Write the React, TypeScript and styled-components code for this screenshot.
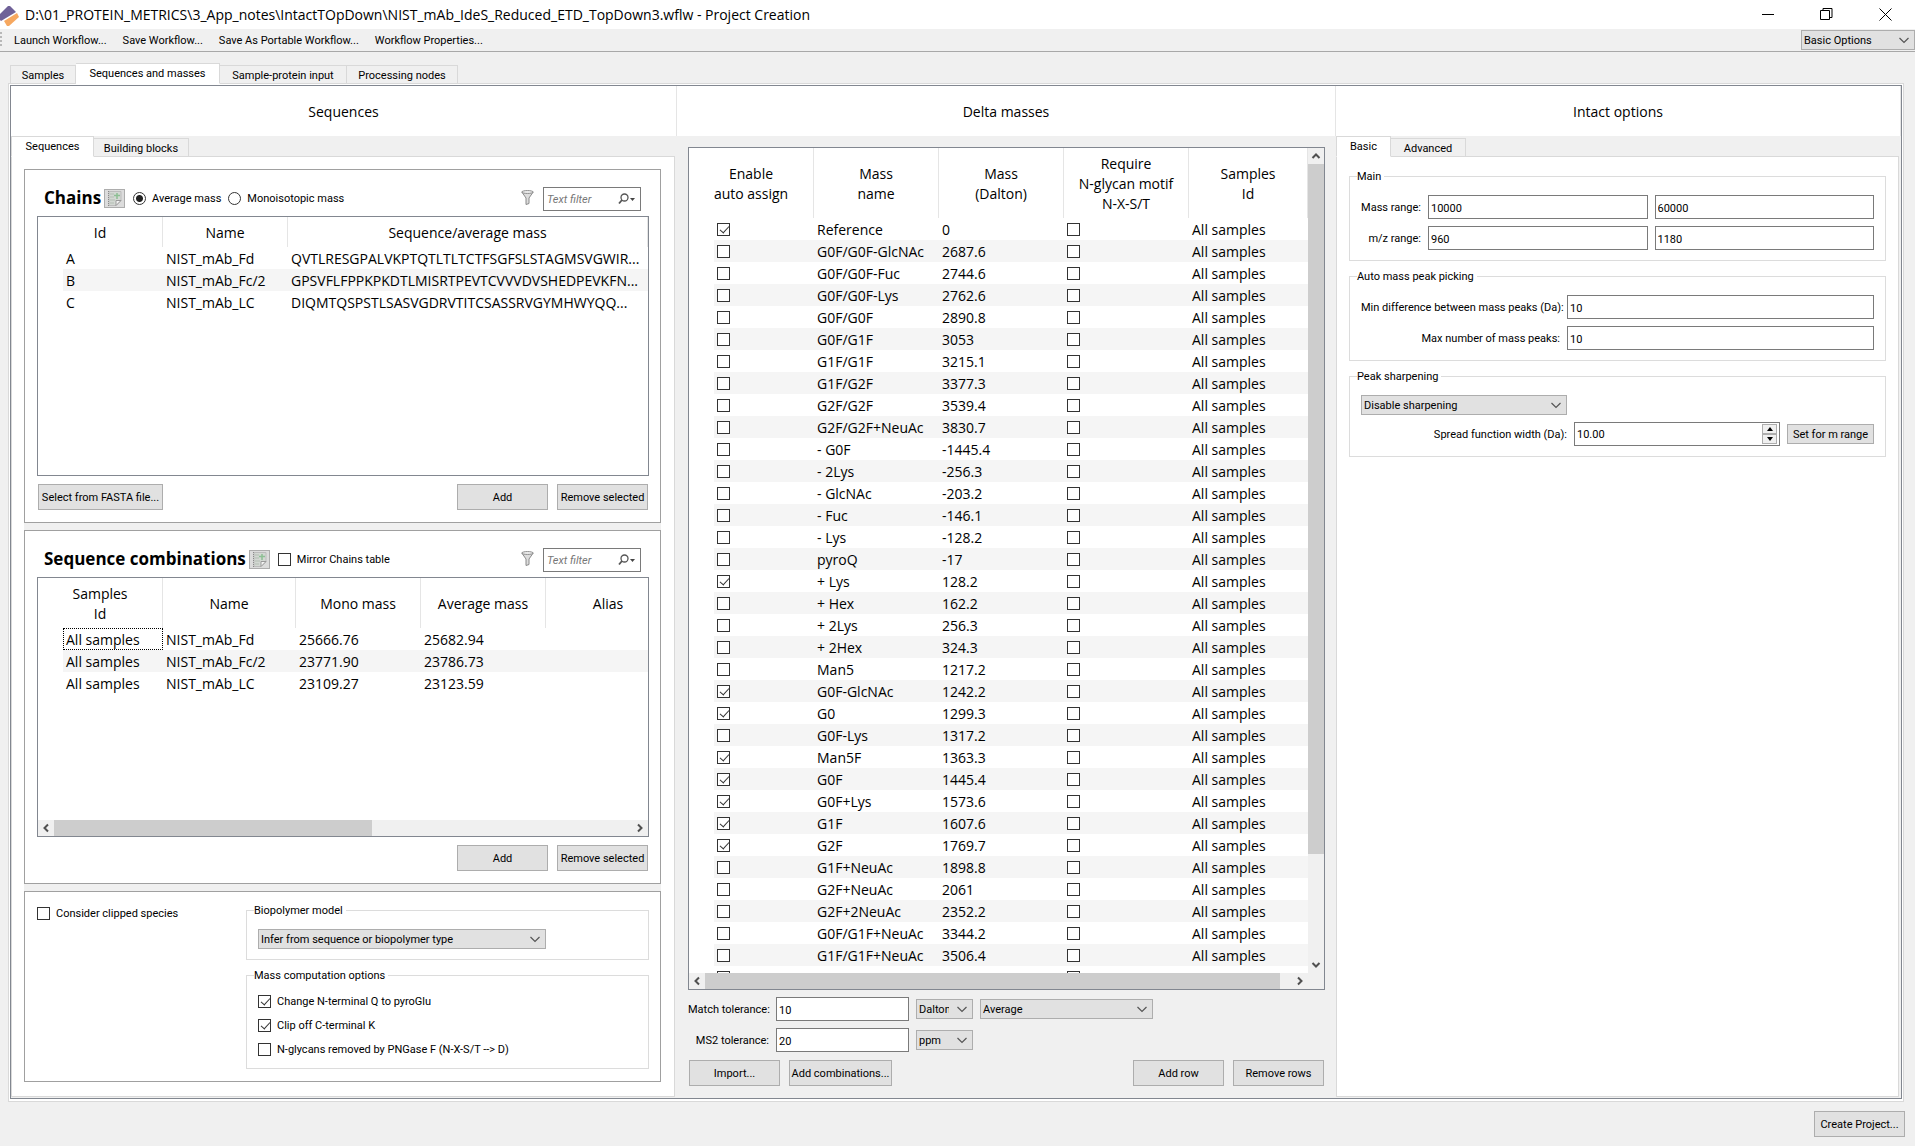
import React from "react";
import styled, { createGlobalStyle, css } from "styled-components";

const ui = '"Roboto", "DejaVu Sans Condensed", sans-serif';
const grid = '"Open Sans", "Noto Sans", sans-serif';

const Global = createGlobalStyle`
  *, *::before, *::after { box-sizing: border-box; }
  body { margin: 0; background: #f0f0f0; color: #000; font: 11px/14px ${ui}; }
  button, input, select { font: inherit; color: inherit; margin: 0; }
`;

const Window = styled.div`
  display: flex;
  flex-direction: column;
  min-height: 100vh;
`;

const TitleBar = styled.header`
  display: flex;
  align-items: center;
  height: 29px;
  background: #fff;
`;

const Title = styled.h1`
  flex: 1;
  margin: 0 0 0 5px;
  font: 400 14px/28px ${grid};
  white-space: nowrap;
`;

const WindowButton = styled.button`
  display: grid;
  place-items: center;
  width: 59px;
  height: 26px;
  padding: 0;
  border: 0;
  background: none;
`;

const Toolbar = styled.nav`
  display: flex;
  align-items: center;
  gap: 16px;
  height: 23px;
  border-bottom: 1px solid #a8a8a8;
`;

const Grip = styled.span`
  width: 2px;
  height: 16px;
  margin-right: -4px;
  background: repeating-linear-gradient(#b8b8b8 0 2px, transparent 2px 4px);
`;

const ToolButton = styled.button`
  padding: 2px 0 0;
  border: 0;
  background: none;
`;

const Spacer = styled.span`
  flex: 1;
`;

const Workspace = styled.main`
  flex: 1;
  display: flex;
  flex-direction: column;
  padding: 11px 11px 0 8px;
`;

const TabRow = styled.div<{ $inset?: number }>`
  display: flex;
  align-items: flex-end;
  height: 20px;
  padding-left: ${(p) => p.$inset ?? 0}px;
`;

const Tab = styled.button<{ $w: number; $on?: boolean; $dark?: boolean }>`
  width: ${(p) => p.$w}px;
  height: 19px;
  padding: 2px 0 0;
  border: 1px solid #d9d9d9;
  border-left-width: 0;
  border-bottom-color: ${(p) => (p.$dark ? "#a0a0a0" : "#d9d9d9")};
  background: #f0f0f0;
  margin-bottom: -1px;
  text-align: center;
  &:first-child { border-left-width: 1px; }
  ${(p) =>
    p.$on &&
    css`
      height: 21px;
      padding: 0;
      background: #fff;
      border-bottom-color: #fff;
      z-index: 1;
    `}
`;

const Frame = styled.div`
  flex: 1;
  display: flex;
  padding: 1px 1px 2px;
  border: 1px solid #d9d9d9;
  background: #fff;
`;

const Columns = styled.div`
  flex: 1;
  display: grid;
  grid-template-columns: 666fr 659fr 565fr;
  grid-template-rows: 50px 1fr;
  border: 1px solid #828790;
  background: #f0f0f0;
`;

const ColumnTitle = styled.h2`
  margin: 0;
  background: #fff;
  border-right: 1px solid #e5e5e5;
  font: 400 14px/52px ${grid};
  text-align: center;
`;

const Column = styled.section<{ $pad?: string }>`
  display: flex;
  flex-direction: column;
  min-width: 0;
  padding: ${(p) => p.$pad ?? "0 2px 1px 0"};
`;

const Pane = styled.div<{ $pad: string }>`
  flex: 1;
  display: flex;
  flex-direction: column;
  gap: 8px;
  padding: ${(p) => p.$pad};
  border: 1px solid #d9d9d9;
  background: #fff;
`;

const Splitter = styled.div`
  flex: 1;
  display: grid;
  grid-template-rows: 1fr 1fr auto;
  gap: 7px;
  background: #f0f0f0;
`;

const Box = styled.section`
  display: flex;
  flex-direction: column;
  min-width: 0;
  padding: 17px 11px 12px 12px;
  border: 1px solid #a0a0a0;
  background: #fff;
`;

const OptionsBox = styled(Box)`
  display: grid;
  grid-template-columns: 209px 1fr;
  align-items: start;
  padding-top: 11px;
  & > label { line-height: 20px; }
`;

const BoxHead = styled.div`
  display: flex;
  align-items: center;
  height: 24px;
  margin-bottom: 5px;
  padding: 0 8px 2px 7px;
`;

const BoxTitle = styled.h3`
  margin: 0 3px 0 0;
  font: 700 17px/24px ${grid};
`;

const IconButton = styled.button`
  width: 21px;
  height: 19px;
  padding: 0;
  border: 1px solid #adadad;
  background: #dcdcdc;
  line-height: 0;
  margin-right: 8px;
`;

const CheckLabel = styled.label`
  display: flex;
  align-items: center;
  gap: 6px;
  margin-right: 7px;
  line-height: 14px;
`;

const LabelText = styled.span`
  padding-top: 1px;
`;

const Check = styled.input.attrs({ type: "checkbox" })`
  appearance: none;
  display: grid;
  flex: none;
  width: 13px;
  height: 13px;
  border: 1px solid #333;
  background: #fff;
  &:checked::before {
    content: "";
    width: 5px;
    height: 9px;
    margin: 0 0 0 4px;
    border: solid #333;
    border-width: 0 1px 1px 0;
    transform: rotate(42deg);
  }
`;

const Radio = styled.input.attrs({ type: "radio" })`
  appearance: none;
  width: 13px;
  height: 13px;
  border: 1px solid #333;
  border-radius: 50%;
  background: #fff;
  &:checked {
    background: radial-gradient(circle, #222 3px, #fff 4px);
  }
`;

const Search = styled.label`
  display: flex;
  align-items: center;
  align-self: flex-start;
  flex: none;
  width: 98px;
  height: 24px;
  margin-left: 9px;
  padding: 0 5px 0 3px;
  border: 1px solid #7a7a7a;
  background: #fff;
`;

const SearchInput = styled.input`
  flex: 1;
  min-width: 0;
  padding: 2px 0 0;
  border: 0;
  outline: 0;
  background: none;
  &::placeholder { color: #777; font-style: italic; opacity: 1; }
`;

const Viewport = styled.div`
  flex: 1;
  display: flex;
  flex-direction: column;
  min-width: 0;
  border: 1px solid #828790;
  background: #fff;
`;

const Scrollable = styled.div`
  flex: 1;
  display: flex;
  min-height: 0;
`;

const Clip = styled.div`
  flex: 1 1 0;
  min-width: 0;
  overflow: hidden;
  contain: size;
`;

const Table = styled.table<{ $head: number; $w?: string }>`
  width: ${(p) => p.$w ?? "100%"};
  border-collapse: separate;
  border-spacing: 0;
  table-layout: fixed;
  font: 14px/20px ${grid};
  th {
    height: ${(p) => p.$head}px;
    padding: 2px 0 0;
    border-right: 1px solid #e5e5e5;
    font-weight: 400;
    white-space: pre-line;
  }
  td {
    height: 22px;
    padding: 2px 0 0 3px;
    white-space: nowrap;
    overflow: hidden;
  }
  td:has(input) { padding-top: 0; }
  tbody tr:nth-child(even) td:not(:first-child) { background: #f5f5f5; }
`;

const FocusCell = styled.td`
  outline: 1px dotted #000;
  outline-offset: -1px;
`;

const Bar = styled.div<{ $v?: boolean }>`
  display: flex;
  flex: none;
  flex-direction: ${(p) => (p.$v ? "column" : "row")};
  ${(p) => (p.$v ? "width: 16px;" : "height: 16px;")}
  background: #f0f0f0;
`;

const BarButton = styled.button`
  display: grid;
  place-items: center;
  flex: none;
  width: 16px;
  height: 16px;
  padding: 0;
  border: 0;
  background: none;
`;

const Track = styled.div<{ $v?: boolean }>`
  display: flex;
  flex: 1;
  flex-direction: ${(p) => (p.$v ? "column" : "row")};
`;

const Thumb = styled.div<{ $size: number }>`
  flex: 0 0 ${(p) => p.$size}%;
  background: #cdcdcd;
`;

const CornerRow = styled.div`
  display: grid;
  grid-template-columns: 1fr 16px;
  background: #f0f0f0;
`;

const Actions = styled.div`
  display: flex;
  align-items: center;
  gap: 9px;
  margin-top: 8px;
  padding: 0 1px;
`;

const Button = styled.button<{ $w: number; $h?: number }>`
  width: ${(p) => p.$w}px;
  height: ${(p) => p.$h ?? 26}px;
  padding: 2px 0 0;
  border: 1px solid #adadad;
  background: #e1e1e1;
  white-space: nowrap;
`;

const Group = styled.fieldset`
  min-width: 0;
  margin: 0;
  padding: 12px 11px 10px;
  border: 1px solid #dcdcdc;
`;

const Legend = styled.legend`
  margin-left: -4px;
  padding: 1px 3px 0 0;
  line-height: 13px;
`;

const Stack = styled.div<{ $gap: number; $pad?: string }>`
  display: grid;
  gap: ${(p) => p.$gap}px;
  padding: ${(p) => p.$pad ?? "0"};
`;

const Fields = styled.div<{ $cols: string }>`
  display: grid;
  grid-template-columns: ${(p) => p.$cols};
  align-items: center;
  gap: 7px;
`;

const FieldLabel = styled.label`
  padding-top: 1px;
  text-align: right;
  white-space: nowrap;
`;

const TextBox = styled.input`
  width: 100%;
  min-width: 0;
  height: 24px;
  padding: 2px 2px 0;
  border: 1px solid #7a7a7a;
  background: #fff;
`;

const SelectShell = styled.span<{ $w: number }>`
  display: inline-grid;
  align-items: center;
  width: ${(p) => p.$w}px;
  height: 20px;
  & > * { grid-area: 1 / 1; }
  & > svg { justify-self: end; margin-right: 6px; pointer-events: none; }
`;

const NativeSelect = styled.select`
  appearance: none;
  width: 100%;
  height: 20px;
  padding: 2px 23px 0 2px;
  border: 1px solid #adadad;
  border-radius: 0;
  background: #e1e1e1;
`;

const Spin = styled.span`
  display: grid;
  grid-template-columns: 1fr 17px;
  height: 24px;
  border: 1px solid #7a7a7a;
  background: #fff;
`;

const SpinInput = styled.input`
  min-width: 0;
  padding: 1px 2px 0;
  border: 0;
  background: none;
`;

const SpinButtons = styled.span`
  display: grid;
  grid-template-rows: 1fr 1fr;
  padding: 1px 2px 1px 0;
`;

const SpinButton = styled.button`
  display: grid;
  place-items: center;
  padding: 0;
  border: 1px solid #adadad;
  background: #f0f0f0;
`;

const Footer = styled.footer`
  display: flex;
  justify-content: flex-end;
  padding: 9px 10px 9px;
`;

const angles = { left: 90, right: -90, up: 180, down: 0 };

const Chevron = ({ dir = "down", bold }: { dir?: keyof typeof angles; bold?: boolean }) => (
  <svg width="10" height="10" viewBox="0 0 10 10" fill="none" stroke={bold ? "#505050" : "#555"} strokeWidth={bold ? 2 : 1.2}>
    <path d={bold ? "M1.5 3 5 6.5 8.5 3" : "M.5 3 5 7.5 9.5 3"} transform={`rotate(${angles[dir]} 5 5)`} />
  </svg>
);

const Logo = () => (
  <svg width="20" height="24" viewBox="0 0 20 24">
    <path d="M0 11 8 3 10 3 16 9 1 18 0 17Z" fill="#6f6198" />
    <path d="M4 18 17 10 19 14 9 23 7 23Z" fill="#f6a860" />
  </svg>
);

const SheetIcon = () => (
  <svg width="19" height="17" viewBox="0 0 19 17">
    <path d="M4 1.5h12v9l-5 5H4Z" fill="#d3d8d3" stroke="#bcbcbc" />
    <path d="M3.500 1v15" stroke="#8a8a8a" strokeDasharray="1 1" />
    <path d="M5 4h4M5 7h4M5 10h5M5 13h4" stroke="#b3bdb3" />
    <path d="M9 5.500h6M12 3v6" stroke="#8dbf94" strokeWidth="1.500" />
    <path d="M16 10.500h-5v5Z" fill="#f4f4f4" stroke="#9a9a9a" />
  </svg>
);

const Funnel = () => (
  <svg width="13" height="16" viewBox="0 0 13 16">
    <path d="M.8 2 5 8v6.500l3-1V8l4.200-6Z" fill="#ddd" stroke="#8a8a8a" />
    <ellipse cx="6.500" cy="2" rx="5.700" ry="1.400" fill="#f4f4f4" stroke="#8a8a8a" />
  </svg>
);

const Lens = () => (
  <svg width="17" height="12" viewBox="0 0 17 12" fill="none" stroke="#555">
    <circle cx="6.500" cy="4.500" r="3.500" strokeWidth="1.300" />
    <path d="M4 7 1 10.500" strokeWidth="1.800" />
    <path d="M12 5h5l-2.500 3Z" fill="#444" stroke="none" />
  </svg>
);

const Select = ({ value, w, label }: { value: string; w: number; label: string }) => (
  <SelectShell $w={w}>
    <NativeSelect aria-label={label} defaultValue={value}>
      <option>{value}</option>
    </NativeSelect>
    <Chevron />
  </SelectShell>
);

const Option = ({ text, on }: { text: string; on?: boolean }) => (
  <CheckLabel>
    <Check defaultChecked={on} />
    <LabelText>{text}</LabelText>
  </CheckLabel>
);

const HBar = ({ size }: { size: number }) => (
  <Bar>
    <BarButton aria-label="Scroll left"><Chevron dir="left" bold /></BarButton>
    <Track><Thumb $size={size} /></Track>
    <BarButton aria-label="Scroll right"><Chevron dir="right" bold /></BarButton>
  </Bar>
);

const FilterBox = ({ label }: { label: string }) => (
  <>
    <Spacer />
    <Funnel />
    <Search>
      <SearchInput placeholder="Text filter" aria-label={label} />
      <Lens />
    </Search>
  </>
);

const chains = [
  ["A", "NIST_mAb_Fd", "QVTLRESGPALVKPTQTLTLTCTFSGFSLSTAGMSVGWIR..."],
  ["B", "NIST_mAb_Fc/2", "GPSVFLFPPKPKDTLMISRTPEVTCVVVDVSHEDPEVKFN..."],
  ["C", "NIST_mAb_LC", "DIQMTQSPSTLSASVGDRVTITCSASSRVGYMHWYQQ..."],
];

const combos = [
  ["NIST_mAb_Fd", "25666.76", "25682.94"],
  ["NIST_mAb_Fc/2", "23771.90", "23786.73"],
  ["NIST_mAb_LC", "23109.27", "23123.59"],
];

const deltas: [string, string, boolean?][] = [
  ["Reference", "0", true],
  ["G0F/G0F-GlcNAc", "2687.6"],
  ["G0F/G0F-Fuc", "2744.6"],
  ["G0F/G0F-Lys", "2762.6"],
  ["G0F/G0F", "2890.8"],
  ["G0F/G1F", "3053"],
  ["G1F/G1F", "3215.1"],
  ["G1F/G2F", "3377.3"],
  ["G2F/G2F", "3539.4"],
  ["G2F/G2F+NeuAc", "3830.7"],
  ["- G0F", "-1445.4"],
  ["- 2Lys", "-256.3"],
  ["- GlcNAc", "-203.2"],
  ["- Fuc", "-146.1"],
  ["- Lys", "-128.2"],
  ["pyroQ", "-17"],
  ["+ Lys", "128.2", true],
  ["+ Hex", "162.2"],
  ["+ 2Lys", "256.3"],
  ["+ 2Hex", "324.3"],
  ["Man5", "1217.2"],
  ["G0F-GlcNAc", "1242.2", true],
  ["G0", "1299.3", true],
  ["G0F-Lys", "1317.2"],
  ["Man5F", "1363.3", true],
  ["G0F", "1445.4", true],
  ["G0F+Lys", "1573.6", true],
  ["G1F", "1607.6", true],
  ["G2F", "1769.7", true],
  ["G1F+NeuAc", "1898.8"],
  ["G2F+NeuAc", "2061"],
  ["G2F+2NeuAc", "2352.2"],
  ["G0F/G1F+NeuAc", "3344.2"],
  ["G1F/G1F+NeuAc", "3506.4"],
];

const ChainsBox = () => (
  <Box>
    <BoxHead>
      <BoxTitle>Chains</BoxTitle>
      <IconButton aria-label="Export chains"><SheetIcon /></IconButton>
      <CheckLabel><Radio name="mass" defaultChecked /><LabelText>Average mass</LabelText></CheckLabel>
      <CheckLabel><Radio name="mass" /><LabelText>Monoisotopic mass</LabelText></CheckLabel>
      <FilterBox label="Filter chains" />
    </BoxHead>
    <Viewport>
      <Clip>
        <Table $head={30}>
          <colgroup><col width="25" /><col width="100" /><col width="125" /><col /></colgroup>
          <thead><tr><th colSpan={2}>Id</th><th>Name</th><th>Sequence/average mass</th></tr></thead>
          <tbody>
            {chains.map(([id, name, seq]) => (
              <tr key={id}><td /><td>{id}</td><td>{name}</td><td>{seq}</td></tr>
            ))}
          </tbody>
        </Table>
      </Clip>
    </Viewport>
    <Actions>
      <Button $w={125}>Select from FASTA file...</Button>
      <Spacer />
      <Button $w={91}>Add</Button>
      <Button $w={91}>Remove selected</Button>
    </Actions>
  </Box>
);

const CombinationsBox = () => (
  <Box>
    <BoxHead>
      <BoxTitle>Sequence combinations</BoxTitle>
      <IconButton aria-label="Export combinations"><SheetIcon /></IconButton>
      <Option text="Mirror Chains table" />
      <FilterBox label="Filter combinations" />
    </BoxHead>
    <Viewport>
      <Clip>
        <Table $head={50} $w="633px">
          <colgroup><col width="25" /><col width="100" /><col width="133" /><col width="125" /><col width="125" /><col width="125" /></colgroup>
          <thead><tr><th colSpan={2}>{"Samples\nId"}</th><th>Name</th><th>Mono mass</th><th>Average mass</th><th>Alias</th></tr></thead>
          <tbody>
            {combos.map(([name, mono, avg], i) => (
              <tr key={name}>
                <td />
                {i === 0 ? <FocusCell>All samples</FocusCell> : <td>All samples</td>}
                <td>{name}</td><td>{mono}</td><td>{avg}</td><td />
              </tr>
            ))}
          </tbody>
        </Table>
      </Clip>
      <HBar size={55} />
    </Viewport>
    <Actions>
      <Spacer />
      <Button $w={91}>Add</Button>
      <Button $w={91}>Remove selected</Button>
    </Actions>
  </Box>
);

const DeltaTable = () => (
  <Viewport>
    <Scrollable>
      <Clip>
        <Table $head={70}>
          <colgroup><col width="25" /><col width="100" /><col width="125" /><col width="125" /><col width="125" /><col /></colgroup>
          <thead>
            <tr>
              <th colSpan={2}>{"Enable\nauto assign"}</th><th>{"Mass\nname"}</th><th>{"Mass\n(Dalton)"}</th>
              <th>{"Require\nN-glycan motif\nN-X-S/T"}</th><th>{"Samples\nId"}</th>
            </tr>
          </thead>
          <tbody>
            {deltas.map(([name, mass, on]) => (
              <tr key={name}>
                <td />
                <td><Check defaultChecked={on} aria-label={`Enable ${name}`} /></td>
                <td>{name}</td><td>{mass}</td>
                <td><Check aria-label={`Require motif for ${name}`} /></td>
                <td>All samples</td>
              </tr>
            ))}
            <tr>
              <td /><td><Check aria-label="Enable next row" /></td><td /><td />
              <td><Check aria-label="Require motif for next row" /></td><td />
            </tr>
          </tbody>
        </Table>
      </Clip>
      <Bar $v>
        <BarButton aria-label="Scroll up"><Chevron dir="up" bold /></BarButton>
        <Track $v><Thumb $size={87} /></Track>
        <BarButton aria-label="Scroll down"><Chevron bold /></BarButton>
      </Bar>
    </Scrollable>
    <CornerRow><HBar size={98} /></CornerRow>
  </Viewport>
);

export default function App() {
  return (
    <Window>
      <Global />
      <TitleBar>
        <Logo />
        <Title>D:\01_PROTEIN_METRICS\3_App_notes\IntactTOpDown\NIST_mAb_IdeS_Reduced_ETD_TopDown3.wflw - Project Creation</Title>
        <WindowButton aria-label="Minimize">
          <svg width="12" height="12"><path d="M0 5.500h12" stroke="#000" /></svg>
        </WindowButton>
        <WindowButton aria-label="Restore">
          <svg width="13" height="13" fill="none" stroke="#000"><path d="M.5 2.500h9v9h-9ZM3 2V.5h9v9H10" /></svg>
        </WindowButton>
        <WindowButton aria-label="Close">
          <svg width="13" height="13" stroke="#000"><path d="M.5.5l12 12M12.500.5l-12 12" /></svg>
        </WindowButton>
      </TitleBar>
      <Toolbar>
        <Grip />
        <ToolButton>Launch Workflow...</ToolButton>
        <ToolButton>Save Workflow...</ToolButton>
        <ToolButton>Save As Portable Workflow...</ToolButton>
        <ToolButton>Workflow Properties...</ToolButton>
        <Spacer />
        <Select value="Basic Options" w={114} label="Option set" />
      </Toolbar>
      <Workspace>
        <TabRow $inset={2}>
          <Tab $w={66} $dark>Samples</Tab>
          <Tab $w={144} $on>Sequences and masses</Tab>
          <Tab $w={127} $dark>Sample-protein input</Tab>
          <Tab $w={111} $dark>Processing nodes</Tab>
        </TabRow>
        <Frame>
          <Columns>
            <ColumnTitle>Sequences</ColumnTitle>
            <ColumnTitle>Delta masses</ColumnTitle>
            <ColumnTitle>Intact options</ColumnTitle>
            <Column>
              <TabRow>
                <Tab $w={83} $on>Sequences</Tab>
                <Tab $w={95}>Building blocks</Tab>
              </TabRow>
              <Pane $pad="12px 13px 14px 12px">
                <Splitter>
                  <ChainsBox />
                  <CombinationsBox />
                  <OptionsBox>
                    <Option text="Consider clipped species" />
                    <Stack $gap={8}>
                      <Group>
                        <Legend>Biopolymer model</Legend>
                        <Stack $gap={0}>
                          <Select value="Infer from sequence or biopolymer type" w={288} label="Biopolymer model" />
                        </Stack>
                      </Group>
                      <Group>
                        <Legend>Mass computation options</Legend>
                        <Stack $gap={9} $pad="0 0 1px">
                          <Option text="Change N-terminal Q to pyroGlu" on />
                          <Option text="Clip off C-terminal K" on />
                          <Option text="N-glycans removed by PNGase F (N-X-S/T --> D)" />
                        </Stack>
                      </Group>
                    </Stack>
                  </OptionsBox>
                </Splitter>
              </Pane>
            </Column>
            <Column $pad="11px 11px 12px">
              <DeltaTable />
              <Stack $gap={7} $pad="7px 0 0">
                <Fields $cols="81px 133px auto auto 1fr">
                  <FieldLabel htmlFor="match">Match tolerance:</FieldLabel>
                  <TextBox id="match" defaultValue="10" />
                  <Select value="Dalton" w={57} label="Match unit" />
                  <Select value="Average" w={173} label="Mass type" />
                </Fields>
                <Fields $cols="81px 133px auto 1fr">
                  <FieldLabel htmlFor="ms2">MS2 tolerance:</FieldLabel>
                  <TextBox id="ms2" defaultValue="20" />
                  <Select value="ppm" w={57} label="MS2 unit" />
                </Fields>
              </Stack>
              <Actions>
                <Button $w={91}>Import...</Button>
                <Button $w={103}>Add combinations...</Button>
                <Spacer />
                <Button $w={91}>Add row</Button>
                <Button $w={91}>Remove rows</Button>
              </Actions>
            </Column>
            <Column>
              <TabRow>
                <Tab $w={55} $on>Basic</Tab>
                <Tab $w={75}>Advanced</Tab>
              </TabRow>
              <Pane $pad="12px">
                <Group>
                  <Legend>Main</Legend>
                  <Fields $cols="60px 1fr 1fr">
                    <FieldLabel htmlFor="mass-lo">Mass range:</FieldLabel>
                    <TextBox id="mass-lo" defaultValue="10000" />
                    <TextBox aria-label="Mass range upper" defaultValue="60000" />
                    <FieldLabel htmlFor="mz-lo">m/z range:</FieldLabel>
                    <TextBox id="mz-lo" defaultValue="960" />
                    <TextBox aria-label="m/z range upper" defaultValue="1180" />
                  </Fields>
                </Group>
                <Group>
                  <Legend>Auto mass peak picking</Legend>
                  <Fields $cols="199px 1fr">
                    <FieldLabel htmlFor="min-diff">Min difference between mass peaks (Da):</FieldLabel>
                    <TextBox id="min-diff" defaultValue="10" />
                    <FieldLabel htmlFor="max-peaks">Max number of mass peaks:</FieldLabel>
                    <TextBox id="max-peaks" defaultValue="10" />
                  </Fields>
                </Group>
                <Group>
                  <Legend>Peak sharpening</Legend>
                  <Stack $gap={7}>
                    <Select value="Disable sharpening" w={206} label="Peak sharpening" />
                    <Fields $cols="206px 1fr 87px">
                      <FieldLabel htmlFor="spread">Spread function width (Da):</FieldLabel>
                      <Spin>
                        <SpinInput id="spread" defaultValue="10.00" />
                        <SpinButtons>
                          <SpinButton aria-label="Increase"><svg width="6" height="4"><path d="M0 4 3 0l3 4Z" /></svg></SpinButton>
                          <SpinButton aria-label="Decrease"><svg width="6" height="4"><path d="M0 0l3 4 3-4Z" /></svg></SpinButton>
                        </SpinButtons>
                      </Spin>
                      <Button $w={87} $h={20}>Set for m range</Button>
                    </Fields>
                  </Stack>
                </Group>
              </Pane>
            </Column>
          </Columns>
        </Frame>
      </Workspace>
      <Footer>
        <Button $w={91}>Create Project...</Button>
      </Footer>
    </Window>
  );
}
